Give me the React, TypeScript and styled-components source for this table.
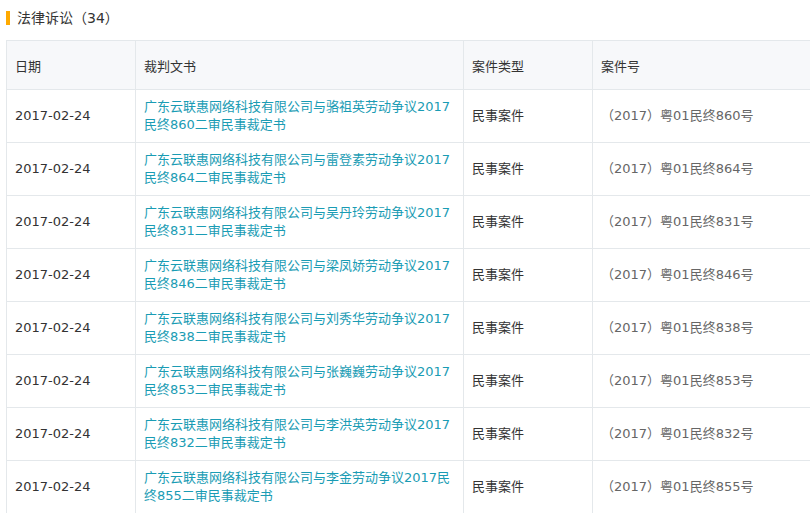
import React from "react";
import styled, { createGlobalStyle } from "styled-components";

const GlobalStyle = createGlobalStyle`
  html, body {
    margin: 0;
    padding: 0;
    background: #ffffff;
    font-family: "DejaVu Sans", "Noto Sans CJK SC", sans-serif;
    overflow: hidden;
  }
`;

const Page = styled.div`
  width: 810px;
  height: 513px;
  overflow: hidden;
  padding-left: 6px;
  box-sizing: border-box;
`;

const TitleBar = styled.div`
  display: flex;
  align-items: center;
  height: 40px;
  padding-bottom: 4px;
  box-sizing: border-box;
  gap: 7px;
`;

const Accent = styled.span`
  display: block;
  width: 4px;
  height: 14px;
  background: #ffaa00;
`;

const TitleText = styled.span`
  font-size: 14px;
  color: #333333;
  line-height: 20px;
`;

const Table = styled.table`
  border-collapse: collapse;
  table-layout: fixed;
  width: 840px;
  font-size: 13px;
`;

const HeadCell = styled.th<{ $w?: number }>`
  ${(p) => (p.$w ? `width: ${p.$w}px;` : "")}
  height: 49px;
  padding: 0 8px;
  box-sizing: border-box;
  text-align: left;
  font-weight: normal;
  color: #333333;
  background: #f7f8fa;
  border: 1px solid #e4e8eb;
  vertical-align: middle;
`;

const Cell = styled.td<{ $tone?: "dark" | "gray" }>`
  height: 52px;
  padding: 8px 8px;
  box-sizing: border-box;
  color: ${(p) => (p.$tone === "gray" ? "#666666" : "#333333")};
  border: 1px solid #e4e8eb;
  vertical-align: middle;
  line-height: 18px;
`;

const DocLink = styled.a`
  display: block;
  color: #1a9cb4;
  text-decoration: none;
  line-height: 18px;
`;

const rows = [
  { name: "骆祖英", no: "860" },
  { name: "雷登素", no: "864" },
  { name: "吴丹玲", no: "831" },
  { name: "梁凤娇", no: "846" },
  { name: "刘秀华", no: "838" },
  { name: "张巍巍", no: "853" },
  { name: "李洪英", no: "832" },
  { name: "李金", no: "855" },
];

export default function App() {
  return (
    <Page>
      <GlobalStyle />
      <TitleBar>
        <Accent />
        <TitleText>法律诉讼（34）</TitleText>
      </TitleBar>
      <Table>
        <thead>
          <tr>
            <HeadCell $w={129}>日期</HeadCell>
            <HeadCell $w={328}>裁判文书</HeadCell>
            <HeadCell $w={129}>案件类型</HeadCell>
            <HeadCell>案件号</HeadCell>
          </tr>
        </thead>
        <tbody>
          {rows.map((r) => (
            <tr key={r.no}>
              <Cell>2017-02-24</Cell>
              <Cell>
                <DocLink href="#">
                  {`广东云联惠网络科技有限公司与${r.name}劳动争议2017民终${r.no}二审民事裁定书`}
                </DocLink>
              </Cell>
              <Cell>民事案件</Cell>
              <Cell $tone="gray">{`（2017）粤01民终${r.no}号`}</Cell>
            </tr>
          ))}
        </tbody>
      </Table>
    </Page>
  );
}
